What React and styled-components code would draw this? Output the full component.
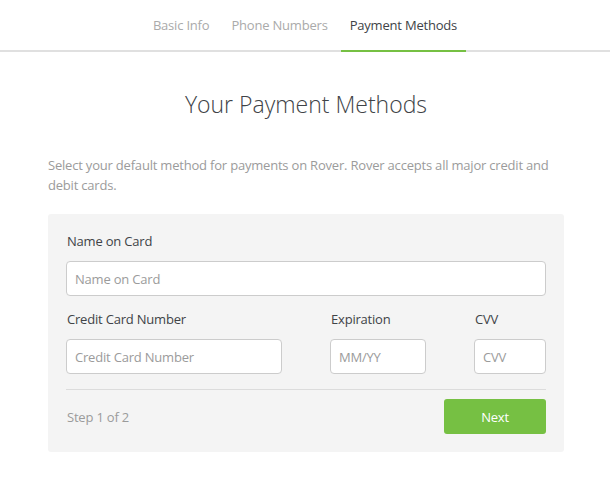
import React from 'react'
import styled, { createGlobalStyle } from 'styled-components'

const GlobalStyle = createGlobalStyle`
  html, body {
    margin: 0;
    padding: 0;
    background: #fff;
  }
  body {
    font-family: 'Open Sans', 'Liberation Sans', sans-serif;
    color: #404347;
    letter-spacing: -0.2px;
  }
  * {
    box-sizing: border-box;
  }
`

const Page = styled.div`
  width: 610px;
`

const TabBar = styled.nav`
  display: flex;
  justify-content: center;
  gap: 4px;
  border-bottom: 2px solid #e0e0e0;
  height: 52px;
`

const Tab = styled.div`
  padding: 16px 9px 0;
  font-size: 13px;
  line-height: 18px;
  color: ${props => props.active ? '#404347' : '#aaa'};
  border-bottom: 2px solid ${props => props.active ? '#76c043' : 'transparent'};
  margin-bottom: -2px;
  white-space: nowrap;
`

const Content = styled.main`
  padding: 0 46px 0 48px;
`

const Title = styled.h1`
  margin: 36px 0 0;
  text-align: center;
  font-weight: 300;
  font-size: 23px;
  line-height: 32px;
  letter-spacing: 0;
  color: #404347;
`

const Intro = styled.p`
  margin: 35px 0 0;
  font-size: 13px;
  line-height: 20px;
  color: #9b9b9b;
`

const Card = styled.section`
  margin-top: 19px;
  background: #f4f4f4;
  border-radius: 3px;
  padding: 18px;
`

const Field = styled.div`
  display: flex;
  flex-direction: column;
`

const Label = styled.label`
  font-size: 13px;
  line-height: 18px;
  color: #404347;
  padding-left: 1px;
  margin-bottom: 11px;
`

const Input = styled.input`
  height: 35px;
  width: 100%;
  border: 1px solid #ccc;
  border-radius: 4px;
  background: #fff;
  padding: 0 8px;
  font-family: inherit;
  font-size: 13px;
  letter-spacing: -0.2px;
  color: #404347;
  outline: none;
  &::placeholder {
    color: #9b9b9b;
  }
`

const Row = styled.div`
  display: grid;
  grid-template-columns: 216px 96px 72px;
  justify-content: space-between;
  margin-top: 14px;
`

const Divider = styled.hr`
  border: none;
  border-top: 1px solid #dcdcdc;
  margin: 15px 0 9px;
`

const Footer = styled.div`
  display: flex;
  align-items: center;
  justify-content: space-between;
`

const Step = styled.span`
  font-size: 13px;
  color: #9b9b9b;
  padding-left: 1px;
`

const Button = styled.button`
  width: 102px;
  height: 35px;
  border: none;
  border-radius: 3px;
  background: #76c043;
  color: #fff;
  font-family: inherit;
  font-size: 13px;
  letter-spacing: -0.2px;
  cursor: pointer;
`

const tabs = ['Basic Info', 'Phone Numbers', 'Payment Methods']

const App = () =>
  <Page>
    <GlobalStyle />
    <TabBar>
      {tabs.map(t => <Tab key={t} active={t === 'Payment Methods'}>{t}</Tab>)}
    </TabBar>
    <Content>
      <Title>Your Payment Methods</Title>
      <Intro>
        Select your default method for payments on Rover. Rover accepts all major credit and debit cards.
      </Intro>
      <Card>
        <Field>
          <Label>Name on Card</Label>
          <Input placeholder="Name on Card" />
        </Field>
        <Row>
          <Field>
            <Label>Credit Card Number</Label>
            <Input placeholder="Credit Card Number" />
          </Field>
          <Field>
            <Label>Expiration</Label>
            <Input placeholder="MM/YY" />
          </Field>
          <Field>
            <Label>CVV</Label>
            <Input placeholder="CVV" />
          </Field>
        </Row>
        <Divider />
        <Footer>
          <Step>Step 1 of 2</Step>
          <Button>Next</Button>
        </Footer>
      </Card>
    </Content>
  </Page>

export default App
